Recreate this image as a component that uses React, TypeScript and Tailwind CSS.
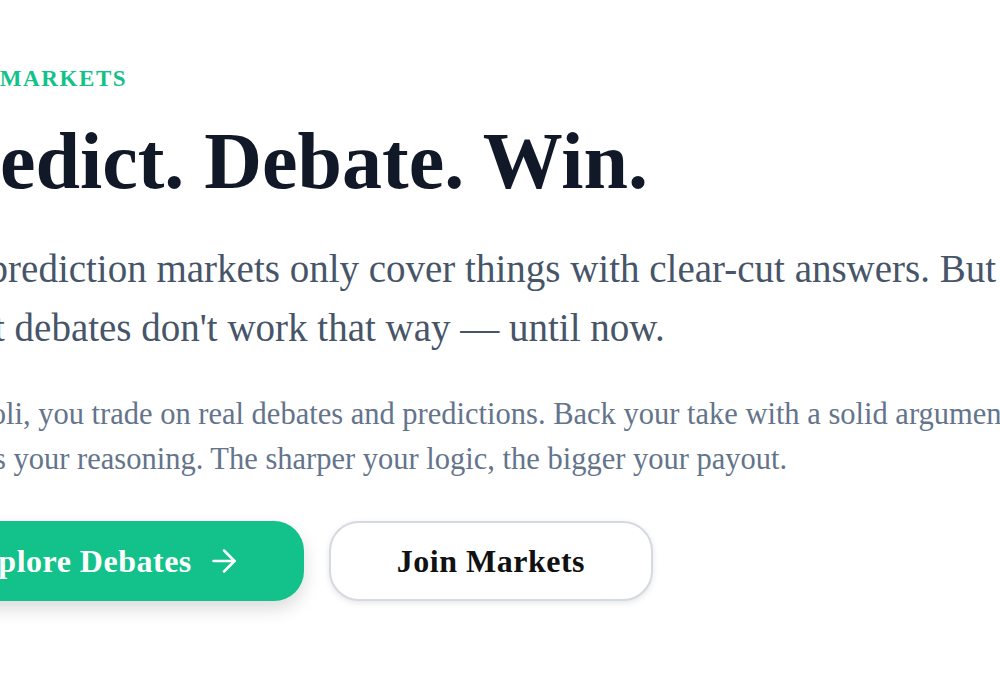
import React from "react";
import { ArrowRight } from "lucide-react";

const serif = { fontFamily: '"Liberation Serif", Georgia, serif' };

export default function App() {
  return (
    <div className="w-screen h-screen overflow-hidden bg-white" style={serif}>
      {/* hero block sits partly off the left edge */}
      <div className="ml-[-83px] pt-[65px] flex flex-col items-start whitespace-nowrap">
        <p className="ml-[5px] text-[23px] leading-[28px] font-bold tracking-[0.07em] text-[#12c28a] uppercase">
          Open Markets
        </p>

        <h1 className="mt-[28px] text-[80px] leading-[80px] font-bold text-[#111827]">
          Predict. Debate. Win.
        </h1>

        <p className="ml-[12px] mt-[39px] text-[39px] leading-[58.5px] text-[#475569]">
          All prediction markets only cover things with clear-cut answers. But
          <br />
          most debates don't work that way — until now.
        </p>

        <p className="mt-[35px] text-[30.5px] leading-[45px] text-[#64748b]">
          In Tipoli, you trade on real debates and predictions. Back your take with a solid argument —
          <br />
          AI vets your reasoning. The sharper your logic, the bigger your payout.
        </p>

        <div className="mt-[39px] flex items-center gap-[25px]">
          <button className="h-20 ml-[-21px] pl-16 pr-[62px] flex items-center gap-[14px] rounded-[30px] bg-[#12c28a] text-white text-[32px] font-bold tracking-[0.5px] shadow-[0_8px_18px_rgba(0,0,0,0.14)]">
            Explore Debates
            <ArrowRight className="w-9 h-9" strokeWidth={1.7} />
          </button>
          <button className="h-20 px-[66px] flex items-center rounded-[30px] bg-white border-2 border-[#d5d9e0] text-[#111111] text-[32px] font-bold tracking-[0.5px] shadow-[0_2px_6px_rgba(0,0,0,0.1)]">
            Join Markets
          </button>
        </div>
      </div>
    </div>
  );
}
